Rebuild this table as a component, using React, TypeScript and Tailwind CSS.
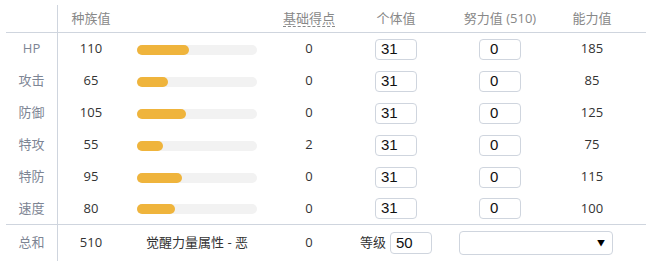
import React from 'react';

const stats = [
  { label: 'HP', base: 110, ev: 0, total: 185 },
  { label: '攻击', base: 65, ev: 0, total: 85 },
  { label: '防御', base: 105, ev: 0, total: 125 },
  { label: '特攻', base: 55, ev: 2, total: 75 },
  { label: '特防', base: 95, ev: 0, total: 115 },
  { label: '速度', base: 80, ev: 0, total: 100 },
];

const cols = 'grid grid-cols-[52px_66px_146px_78px_96px_112px_72px]';

export default function App() {
  return (
    <div className="w-[646px] h-[264px] bg-white overflow-hidden pt-[5px] pl-[6px] font-['Open_Sans','Noto_Sans_CJK_SC',sans-serif] text-[13px] text-[#333]">
      {/* 表头 */}
      <div className={`${cols} h-[28px] border-b border-[#cfd5de] text-[#888]`}>
        <div className="border-r border-[#cfd5de]" />
        <div className="flex items-center justify-center">种族值</div>
        <div />
        <div className="flex items-center justify-center">
          <span className="border-b border-dashed border-[#888] leading-[16px]">基础得点</span>
        </div>
        <div className="flex items-center justify-center">个体值</div>
        <div className="flex items-center justify-center">努力值 (510)</div>
        <div className="flex items-center justify-center">能力值</div>
      </div>

      {/* 各项能力 */}
      {stats.map((s, i) => (
        <div
          key={s.label}
          className={`${cols} h-[32px] ${i === stats.length - 1 ? 'border-b border-[#cfd5de]' : ''}`}
        >
          <div className="flex items-center justify-center border-r border-[#cfd5de] text-[#7d8594]">{s.label}</div>
          <div className="flex items-center justify-center">{s.base}</div>
          <div className="flex items-center pl-[13px] pt-px">
            <div className="w-[120px] h-[10px] rounded-full bg-[#f2f2f2]">
              <div className="h-full rounded-full bg-[#efb43c]" style={{ width: `${(s.base / 255) * 120}px` }} />
            </div>
          </div>
          <div className="flex items-center justify-center">{s.ev}</div>
          <div className="flex items-center justify-center">
            <div className="w-[42px] h-[21px] border border-[#cfd5de] rounded-[4px] pl-[5px] flex items-center font-['Liberation_Sans',sans-serif] text-[15px] text-[#111]">31</div>
          </div>
          <div className="flex items-center justify-center">
            <div className="w-[42px] h-[21px] border border-[#cfd5de] rounded-[4px] pl-[10px] flex items-center font-['Liberation_Sans',sans-serif] text-[15px] text-[#111]">0</div>
          </div>
          <div className="flex items-center justify-center">{s.total}</div>
        </div>
      ))}

      {/* 总和 */}
      <div className={`${cols} h-[36px]`}>
        <div className="flex items-center justify-center border-r border-[#cfd5de] text-[#7d8594]">总和</div>
        <div className="flex items-center justify-center">510</div>
        <div className="flex items-center justify-center">觉醒力量属性 - 恶</div>
        <div className="flex items-center justify-center">0</div>
        <div className="flex items-center justify-center gap-[4px]">
          <span className="text-[#333]">等级</span>
          <div className="w-[42px] h-[22px] border border-[#cfd5de] rounded-[4px] pl-[5px] flex items-center font-['Liberation_Sans',sans-serif] text-[15px] text-[#111]">50</div>
        </div>
        <div className="col-span-2 flex items-center pl-[15px]">
          <div className="relative w-[154px] h-[24px] border border-[#cfd5de] rounded-[4px]">
            <span className="absolute right-[7px] top-[6px] text-[8px] leading-[10px] text-black">▼</span>
          </div>
        </div>
      </div>
    </div>
  );
}
